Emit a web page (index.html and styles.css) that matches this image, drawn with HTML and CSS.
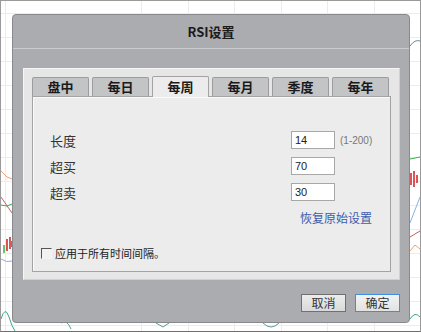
FILE: index.html
```html
<!DOCTYPE html>
<html lang="zh">
<head>
    <meta charset="UTF-8">
    <meta name="viewport" content="width=device-width, initial-scale=1.0">
    <title>RSI设置</title>
    <link rel="stylesheet" href="styles.css">
</head>
<body>
    <div class="screen">
        <!-- chart behind the modal -->
        <svg class="chart" width="419" height="330" viewBox="0 0 419 330">
            <g stroke="#ececec" stroke-width="1">
                <path d="M0 12.5H419M0 36.5H419M0 60.5H419M0 84.5H419M0 108.5H419M0 132.5H419M0 156.5H419M0 180.5H419M0 204.5H419M0 228.5H419M0 252.5H419M0 276.5H419M0 300.5H419M0 324.5H419"/>
                <path d="M4.5 0V330M140.5 0V330M187.5 0V330M233.5 0V330M280.5 0V330M326.5 0V330M373.5 0V330"/>
            </g>
            <g fill="none" stroke-width="1">
                <path d="M0 170 L6 176 L11 178" stroke="#f0a070"/>
                <path d="M0 204 L6 205 L11 203" stroke="#36b24a"/>
                <path d="M0 196 L11 212" stroke="#c06060"/>
                <path d="M0 258 Q6 262 11 260" stroke="#8ab0e0"/>
                <path d="M0 318 Q4 304 8 316 Q11 326 14 330" stroke="#3aa890"/>
                <path d="M409 45 Q414 38 419 40" stroke="#6a8a9a"/>
                <path d="M409 158 L419 156" stroke="#36b24a"/>
                <path d="M409 222 L419 196" stroke="#8ab0e0"/>
                <path d="M409 236 L419 230" stroke="#c06060"/>
                <path d="M409 250 L414 244 L419 248" stroke="#f0a070"/>
                <path d="M409 318 Q414 310 419 316" stroke="#3aa890"/>
                <path d="M60 322 Q66 318 70 328 M155 322 L162 326 L168 322 M262 322 Q270 330 278 322" stroke="#5a9a9a"/>
            </g>
            <g stroke="#d02020" stroke-width="1.5">
                <path d="M6 238V250M9 236V248M11 240V246"/>
                <path d="M410 172V184M413 170V186M416 174V182"/>
            </g>
            <path d="M3 244V252" stroke="#36b24a" stroke-width="1.5"/>
        </svg>

        <div class="dialog">
            <div class="dialog-title">RSI设置</div>
            <div class="dialog-body">
                <div class="panel">
                    <div class="tabs">
                        <div class="tab">盘中</div>
                        <div class="tab">每日</div>
                        <div class="tab active">每周</div>
                        <div class="tab">每月</div>
                        <div class="tab">季度</div>
                        <div class="tab">每年</div>
                    </div>
                    <div class="tab-content">
                        <div class="field">
                            <label class="field-label">长度</label>
                            <input class="field-input" type="text" value="14">
                            <span class="field-hint">(1-200)</span>
                        </div>
                        <div class="field">
                            <label class="field-label">超买</label>
                            <input class="field-input" type="text" value="70">
                        </div>
                        <div class="field">
                            <label class="field-label">超卖</label>
                            <input class="field-input" type="text" value="30">
                        </div>
                        <div class="reset-row">
                            <a href="#" class="reset-link">恢复原始设置</a>
                        </div>
                        <label class="apply-all">
                            <span class="checkbox"></span>
                            应用于所有时间间隔。
                        </label>
                    </div>
                </div>
                <div class="dialog-footer">
                    <button class="btn">取消</button>
                    <button class="btn primary">确定</button>
                </div>
            </div>
        </div>
    </div>
</body>
</html>
```

FILE: styles.css
```css
body {
    margin: 0;
    font-family: "Noto Sans CJK SC", "Liberation Sans", sans-serif;
    color: #2b2b2b;
}

.screen {
    position: relative;
    width: 421px;
    height: 332px;
    box-sizing: border-box;
    border: 1px solid #9a9a9a;
    border-bottom-color: #6e6e6e;
    background: #fff;
    overflow: hidden;
}

.chart {
    display: block;
}

.dialog {
    position: absolute;
    left: 11px;
    top: 13px;
    width: 398px;
    height: 309px;
    box-sizing: border-box;
    background: #abacaf;
    border: 1px solid #88898c;
    border-radius: 4px;
    display: flex;
    flex-direction: column;
}

.dialog-title {
    height: 33px;
    line-height: 33px;
    text-align: center;
    font-size: 13px;
    font-weight: bold;
    color: #1a1a1a;
    border-bottom: 1px solid #cbcccf;
}

.dialog-body {
    flex: 1;
    padding: 19px 9px 0 10px;
    display: flex;
    flex-direction: column;
}

.panel {
    height: 212px;
    box-sizing: border-box;
    background: #e6e6e6;
    border: 1px solid #f6f6f6;
    border-right-color: #d0d0d0;
    border-bottom-color: #d0d0d0;
    padding: 8px 8px 7px 8px;
    display: flex;
    flex-direction: column;
}

.tabs {
    display: flex;
    gap: 3px;
    height: 19px;
}

.tab {
    width: 57px;
    height: 19px;
    box-sizing: border-box;
    background: #c3c4c6;
    border: 1px solid #9c9c9e;
    border-bottom: none;
    border-radius: 2px 2px 0 0;
    text-align: center;
    font-size: 13px;
    font-weight: bold;
    line-height: 18px;
    color: #1a1a1a;
}

.tab.active {
    position: relative;
    z-index: 1;
    height: 21px;
    margin-top: -1px;
    background: #ececec;
    border-color: #a3a3a3;
    line-height: 20px;
}

.tab-content {
    flex: 1;
    box-sizing: border-box;
    background: #ececec;
    border: 1px solid #a3a3a3;
    box-shadow: inset 1px 1px 0 #fafafa;
    padding: 30px 18px 10px 8px;
    display: flex;
    flex-direction: column;
}

.field {
    display: flex;
    align-items: center;
    height: 26px;
    padding-left: 9px;
}

.field-label {
    flex-shrink: 0;
    width: 241px;
    font-size: 13px;
    color: #333;
}

.field-input {
    flex-shrink: 0;
    width: 44px;
    height: 18px;
    box-sizing: border-box;
    margin: 0;
    padding: 0 3px;
    border: 1px solid #a8a8a8;
    background: #fff;
    font-family: "Liberation Sans", sans-serif;
    font-size: 11px;
    color: #222;
    outline: none;
}

.field-hint {
    margin-left: 5px;
    white-space: nowrap;
    font-family: "Liberation Sans", sans-serif;
    font-size: 10px;
    color: #777;
}

.reset-row {
    margin-top: 3px;
    text-align: right;
    line-height: 16px;
}

.reset-link {
    font-size: 12px;
    color: #3a5cae;
    text-decoration: none;
}

.apply-all {
    margin-top: auto;
    display: flex;
    align-items: center;
    gap: 3px;
    height: 16px;
    font-size: 11px;
    color: #222;
}

.checkbox {
    width: 11px;
    height: 11px;
    box-sizing: border-box;
    border: 1px solid #f4f4f4;
    border-top-color: #555;
    border-left-color: #555;
    background: #f2f2f2;
}

.dialog-footer {
    margin-top: 14px;
    display: flex;
    justify-content: flex-end;
    gap: 9px;
}

.btn {
    width: 45px;
    height: 18px;
    box-sizing: border-box;
    padding: 0;
    border: 1px solid #707070;
    background: linear-gradient(#ececec, #d9d9d9);
    font-family: "Noto Sans CJK SC", sans-serif;
    font-size: 12px;
    line-height: 16px;
    color: #333;
}

.btn.primary {
    border-color: #3d8ee2;
    background: linear-gradient(#f2f2f2, #e2e2e2);
}
```
